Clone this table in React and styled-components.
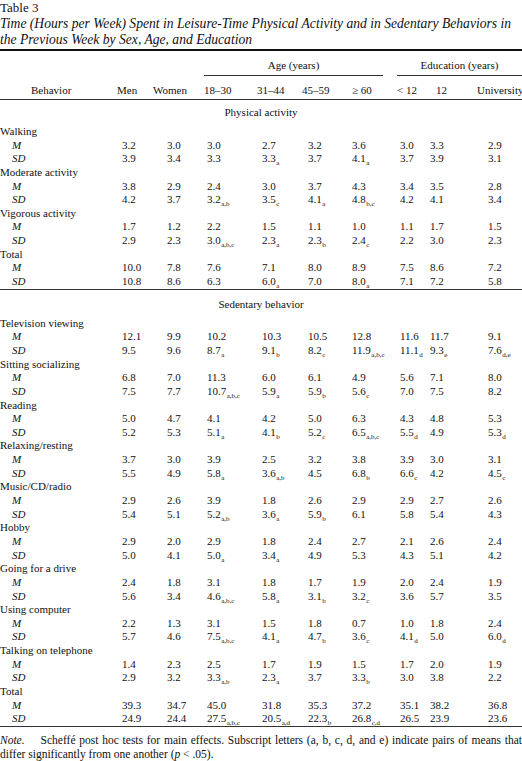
import React from 'react';
import styled, { createGlobalStyle } from 'styled-components';

const GlobalStyle = createGlobalStyle`
  html, body {
    margin: 0;
    padding: 0;
    background: #ffffff;
  }
  body {
    font-family: 'Liberation Serif', 'Times New Roman', serif;
    color: #111111;
  }
`;

const Page = styled.div`
  width: 522px;
  height: 761px;
  overflow: hidden;
  font-size: 11px;
`;

const Caption = styled.div`
  font-size: 13px;
  line-height: 16px;
`;

const Title = styled.div`
  font-style: italic;
  font-size: 13.6px;
`;

const TopRule = styled.div`
  margin-top: 1px;
  border-top: 2px solid #111111;
`;

const GroupRow = styled.div`
  display: grid;
  grid-template-columns: 204px 179px 14px 125px;
  height: 25px;
`;

const GroupCell = styled.div`
  grid-column: ${p => p.$col};
  align-self: end;
  text-align: center;
  line-height: 14px;
  padding-bottom: 3px;
  border-bottom: 1px solid #333333;
`;

const HeaderRow = styled.div`
  display: grid;
  grid-template-columns: 117px 36px 51px 53px 45px 50px 45px 39px 41px 45px;
  height: 24px;
  line-height: 14px;
  padding-top: 7px;
  box-sizing: border-box;
  border-bottom: 1px solid #333333;
`;

const HeaderCell = styled.div`
  white-space: nowrap;
  padding-left: ${p => p.$indent || 0}px;
`;

const SectionTitle = styled.div`
  height: ${p => p.$height}px;
  padding-top: ${p => p.$top}px;
  box-sizing: border-box;
  line-height: 14px;
  text-align: center;
`;

const Row = styled.div`
  display: grid;
  grid-template-columns: 122px 45px 40px 55px 46px 44px 48px 30px 58px 34px;
  height: 13.65px;
  line-height: 13.65px;
  white-space: nowrap;
`;

const Label = styled.div`
  padding-left: ${p => (p.$stat ? 12 : 0)}px;
  font-style: ${p => (p.$stat ? 'italic' : 'normal')};
`;

const Value = styled.div``;

const Sub = styled.span`
  font-size: 7px;
  line-height: 0;
  position: relative;
  top: 3px;
  margin-left: 0.5px;
`;

const MidRule = styled.div`
  border-top: 1px solid #333333;
`;

const NoteBlock = styled.div`
  padding-top: 6px;
  font-size: 11.5px;
  line-height: 14px;
  white-space: nowrap;
`;

const NoteLine = styled.div`
  text-align: ${p => (p.$justify ? 'justify' : 'left')};
  text-align-last: ${p => (p.$justify ? 'justify' : 'auto')};
`;

const NoteLead = styled.span`
  font-style: italic;
  margin-right: 16px;
`;

const Italic = styled.span`
  font-style: italic;
`;

const headers = [
  ['Behavior', 31],
  ['Men'],
  ['Women'],
  ['18–30'],
  ['31–44'],
  ['45–59'],
  ['≥ 60'],
  ['< 12'],
  ['12'],
  ['University'],
];

const physical = [
  {
    name: 'Walking',
    m: '3.2 3.0 3.0 2.7 3.2 3.6 3.0 3.3 2.9',
    sd: '3.9 3.4 3.3 3.3|a 3.7 4.1|a 3.7 3.9 3.1',
  },
  {
    name: 'Moderate activity',
    m: '3.8 2.9 2.4 3.0 3.7 4.3 3.4 3.5 2.8',
    sd: '4.2 3.7 3.2|a,b 3.5|c 4.1|a 4.8|b,c 4.2 4.1 3.4',
  },
  {
    name: 'Vigorous activity',
    m: '1.7 1.2 2.2 1.5 1.1 1.0 1.1 1.7 1.5',
    sd: '2.9 2.3 3.0|a,b,c 2.3|a 2.3|b 2.4|c 2.2 3.0 2.3',
  },
  {
    name: 'Total',
    m: '10.0 7.8 7.6 7.1 8.0 8.9 7.5 8.6 7.2',
    sd: '10.8 8.6 6.3 6.0|a 7.0 8.0|a 7.1 7.2 5.8',
  },
];

const sedentary = [
  {
    name: 'Television viewing',
    m: '12.1 9.9 10.2 10.3 10.5 12.8 11.6 11.7 9.1',
    sd: '9.5 9.6 8.7|a 9.1|b 8.2|c 11.9|a,b,c 11.1|d 9.3|e 7.6|d,e',
  },
  {
    name: 'Sitting socializing',
    m: '6.8 7.0 11.3 6.0 6.1 4.9 5.6 7.1 8.0',
    sd: '7.5 7.7 10.7|a,b,c 5.9|a 5.9|b 5.6|c 7.0 7.5 8.2',
  },
  {
    name: 'Reading',
    m: '5.0 4.7 4.1 4.2 5.0 6.3 4.3 4.8 5.3',
    sd: '5.2 5.3 5.1|a 4.1|b 5.2|c 6.5|a,b,c 5.5|d 4.9 5.3|d',
  },
  {
    name: 'Relaxing/resting',
    m: '3.7 3.0 3.9 2.5 3.2 3.8 3.9 3.0 3.1',
    sd: '5.5 4.9 5.8|a 3.6|a,b 4.5 6.8|b 6.6|c 4.2 4.5|c',
  },
  {
    name: 'Music/CD/radio',
    m: '2.9 2.6 3.9 1.8 2.6 2.9 2.9 2.7 2.6',
    sd: '5.4 5.1 5.2|a,b 3.6|a 5.9|b 6.1 5.8 5.4 4.3',
  },
  {
    name: 'Hobby',
    m: '2.9 2.0 2.9 1.8 2.4 2.7 2.1 2.6 2.4',
    sd: '5.0 4.1 5.0|a 3.4|a 4.9 5.3 4.3 5.1 4.2',
  },
  {
    name: 'Going for a drive',
    m: '2.4 1.8 3.1 1.8 1.7 1.9 2.0 2.4 1.9',
    sd: '5.6 3.4 4.6|a,b,c 5.8|a 3.1|b 3.2|c 3.6 5.7 3.5',
  },
  {
    name: 'Using computer',
    m: '2.2 1.3 3.1 1.5 1.8 0.7 1.0 1.8 2.4',
    sd: '5.7 4.6 7.5|a,b,c 4.1|a 4.7|b 3.6|c 4.1|d 5.0 6.0|d',
  },
  {
    name: 'Talking on telephone',
    m: '1.4 2.3 2.5 1.7 1.9 1.5 1.7 2.0 1.9',
    sd: '2.9 3.2 3.3|a,b 2.3|a 3.7 3.3|b 3.0 3.8 2.2',
  },
  {
    name: 'Total',
    m: '39.3 34.7 45.0 31.8 35.3 37.2 35.1 38.2 36.8',
    sd: '24.9 24.4 27.5|a,b,c 20.5|a,d 22.3|b 26.8|c,d 26.5 23.9 23.6',
  },
];

// "3.3|a" -> 3.3 with subscript a
const Cell = ({ raw }) => {
  const [num, sub] = raw.split('|');
  return (
    <Value>
      {num}
      {sub && <Sub>{sub}</Sub>}
    </Value>
  );
};

const StatRow = ({ stat, values }) => (
  <Row>
    <Label $stat>{stat}</Label>
    {values.split(' ').map((v, i) => (
      <Cell key={i} raw={v} />
    ))}
  </Row>
);

const Behavior = ({ item }) => (
  <>
    <Row>
      <Label>{item.name}</Label>
    </Row>
    <StatRow stat="M" values={item.m} />
    <StatRow stat="SD" values={item.sd} />
  </>
);

export default function App() {
  return (
    <Page>
      <GlobalStyle />
      <Caption>
        <div>Table 3</div>
        <Title>
          Time (Hours per Week) Spent in Leisure-Time Physical Activity and in Sedentary Behaviors in
          <br />
          the Previous Week by Sex, Age, and Education
        </Title>
      </Caption>
      <TopRule />

      <GroupRow>
        <GroupCell $col="2">Age (years)</GroupCell>
        <GroupCell $col="4">Education (years)</GroupCell>
      </GroupRow>
      <HeaderRow>
        {headers.map(([text, indent]) => (
          <HeaderCell key={text} $indent={indent}>{text}</HeaderCell>
        ))}
      </HeaderRow>

      <SectionTitle $height={25} $top={5}>Physical activity</SectionTitle>
      {physical.map(item => (
        <Behavior key={item.name} item={item} />
      ))}
      <MidRule />

      <SectionTitle $height={27} $top={7}>Sedentary behavior</SectionTitle>
      {sedentary.map(item => (
        <Behavior key={item.name} item={item} />
      ))}
      <MidRule />

      <NoteBlock>
        <NoteLine $justify>
          <NoteLead>Note.</NoteLead>
          Scheffé post hoc tests for main effects. Subscript letters (a, b, c, d, and e) indicate pairs of means that
        </NoteLine>
        <NoteLine>
          differ significantly from one another (<Italic>p</Italic> &lt; .05).
        </NoteLine>
      </NoteBlock>
    </Page>
  );
}
